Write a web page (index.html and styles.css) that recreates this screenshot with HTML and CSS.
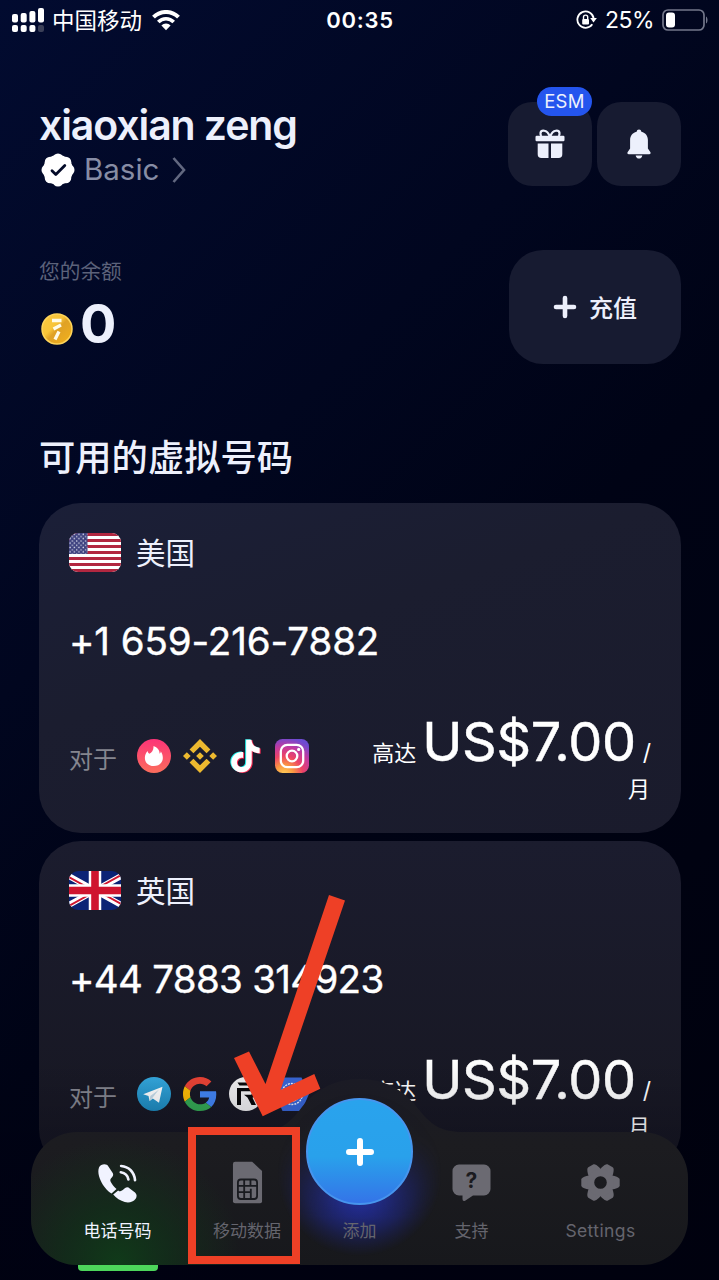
FILE: index.html
```html
<!DOCTYPE html>
<html lang="zh-CN">
<head>
<meta charset="utf-8">
<title>虚拟号码</title>
<link rel="stylesheet" href="styles.css">
</head>
<body>
<div class="screen">
  <header class="status">
    <div class="status-left">
      <svg class="signal" viewBox="0 0 32 24" fill="#fff"><rect y="6" width="6" height="8.5" rx="2"/><rect x="8.7" y="5" width="6" height="9.5" rx="2"/><rect x="17.4" y="3" width="6" height="11.5" rx="2"/><rect x="26" width="6" height="14.5" rx="2"/><rect y="17" width="6" height="7" rx="2"/><rect x="8.7" y="17" width="6" height="7" rx="2"/><rect x="17.4" y="17" width="6" height="7" rx="2"/><rect x="26" y="17" width="6" height="7" rx="2" fill="#3b4058"/></svg>
      <span class="carrier">中国移动</span>
      <svg class="wifi" viewBox="0 0 28 21" fill="none" stroke="#fff"><path d="M1.5 7.2C8.5.2 19.5.2 26.500 7.200" stroke-width="4"/><path d="M6.300 12C10.500 7.600 17.500 7.600 21.700 12" stroke-width="3.600"/><path d="M9.400 15.500C11.700 12.800 16.300 12.800 18.600 15.500L14 20.300Z" fill="#fff" stroke="none"/></svg>
    </div>
    <div class="clock">00:35</div>
    <div class="status-right">
      <svg class="lock" viewBox="0 0 21 20" fill="none" stroke="#fff" stroke-width="1.8"><path d="M16.300 14.300A8.200 8.200 0 1 1 17.700 8.500"/><path d="M14.200 8H20.900L17.500 12.500Z" fill="#fff" stroke="none"/><rect x="6.200" y="8.900" width="6.800" height="5.500" rx="1" fill="#fff" stroke="none"/><path d="M7.500 9V7.200a2.100 2.100 0 0 1 4.200 0V9" stroke-width="1.400"/></svg>
      <span class="percent">25%</span>
      <svg class="battery" viewBox="0 0 46 22"><rect x="1" y="1" width="41" height="20" rx="5" fill="none" stroke="#73778a" stroke-width="1.700"/><rect x="4" y="3.500" width="9" height="15" rx="3" fill="#fff"/><path d="M44 7.500c2 1 2 6 0 7z" fill="#73778a"/></svg>
    </div>
  </header>

  <main class="content">
    <section class="profile">
      <div class="who">
        <h1 class="name">xiaoxian zeng</h1>
        <div class="plan">
          <svg class="verified" viewBox="-17 -17 34 34" fill="#fff"><circle r="15"/><circle cx="11" r="5.500"/><circle cx="-11" r="5.500"/><circle cy="11" r="5.500"/><circle cy="-11" r="5.500"/><circle cx="7.800" cy="7.800" r="5.500"/><circle cx="-7.800" cy="7.800" r="5.500"/><circle cx="7.800" cy="-7.800" r="5.500"/><circle cx="-7.800" cy="-7.800" r="5.500"/><path d="M-6 .8L-2.200 4.500 6.800-4.600" fill="none" stroke="#030a28" stroke-width="2.800" stroke-linecap="round" stroke-linejoin="round"/></svg>
          <span class="plan-name">Basic</span>
          <svg class="chevron" viewBox="0 0 14 28" fill="none" stroke="#626880" stroke-width="2.600"><path d="M1.500 2L12 14 1.500 26"/></svg>
        </div>
      </div>
      <div class="actions">
        <div class="tile">
          <svg class="gift" viewBox="0 0 30 30" fill="#edf0fc"><path d="M14.500 7C12 0 6 1 5.500 4c-.2 1.200.3 2.400 1 3M15.500 7C18 0 24 1 24.500 4c.2 1.200-.3 2.400-1 3" fill="none" stroke="#edf0fc" stroke-width="2.200"/><rect x=".5" y="6.700" width="29" height="5.600" rx="1.200"/><path d="M2.700 14.500H13.500V29H6.500a3.800 3.800 0 0 1-3.800-3.800zM16 14.500H27.300V25.200A3.800 3.800 0 0 1 23.500 29H16z"/></svg>
          <span class="badge">ESM</span>
        </div>
        <div class="tile">
          <svg class="bell" viewBox="0 0 24 30" fill="#edf0fc"><path d="M12 .5a2.500 2.500 0 0 1 2.400 2.200c4.300 1 6.500 4.400 6.500 8.300v8.500l2.400 3.600c.7 1.200.3 2.200-1.100 2.200H1.800c-1.400 0-1.800-1-1.100-2.200l2.400-3.600V11c0-3.900 2.200-7.300 6.500-8.300A2.500 2.500 0 0 1 12 .5z"/><path d="M8.700 26.500h6.600C15 30.600 9 30.600 8.700 26.500z"/></svg>
        </div>
      </div>
    </section>

    <section class="balance">
      <div class="funds">
        <div class="funds-label">您的余额</div>
        <div class="funds-row">
          <svg class="coin" viewBox="0 0 32 32"><defs><linearGradient id="gold" x1="0" y1="0" x2="1" y2="1"><stop stop-color="#fcca42"/><stop offset=".4" stop-color="#f8c438"/><stop offset=".52" stop-color="#dfa126"/><stop offset="1" stop-color="#f4b21a"/></linearGradient></defs><circle cx="16" cy="16" r="15" fill="url(#gold)" stroke="#ffd55a" stroke-width="1.500"/><path d="M11 7.500H20.500M12.500 16L20 12M14 26.500L18 18.500" stroke="#fffbe8" stroke-width="3.300"/></svg>
          <span class="amount">0</span>
        </div>
      </div>
      <div class="topup">
        <svg class="plus" viewBox="0 0 24 24" stroke="#edf0fc" stroke-width="4.600" stroke-linecap="round"><path d="M12 3V21M3 12H21"/></svg>
        <span class="topup-label">充值</span>
      </div>
    </section>

    <h2 class="heading">可用的虚拟号码</h2>

    <article class="card">
      <div class="country">
        <svg class="flag" viewBox="0 0 52 39"><defs><clipPath id="fc"><rect width="52" height="39" rx="9"/></clipPath><pattern id="stars" width="4.400" height="4.400" patternUnits="userSpaceOnUse"><circle cx="1.100" cy="1.300" r=".75" fill="#d9dbea"/><circle cx="3.300" cy="3.500" r=".75" fill="#d9dbea"/></pattern></defs><g clip-path="url(#fc)"><rect width="52" height="39" fill="#fff"/><path d="M0 1.500H52M0 7.500H52M0 13.500H52M0 19.500H52M0 25.500H52M0 31.500H52M0 37.500H52" stroke="#b22740" stroke-width="3"/><rect width="18.500" height="21" fill="#3f4380"/><rect width="18.500" height="21" fill="url(#stars)"/></g></svg>
        <span>美国</span>
      </div>
      <div class="number">+1 659-216-7882</div>
      <div class="offer">
        <div class="apps">
          <span class="apps-label">对于</span>
          <svg class="app" viewBox="0 0 34 34"><defs><linearGradient id="tin" x1="0" y1="0" x2="0" y2="1"><stop stop-color="#fc3478"/><stop offset="1" stop-color="#fb6d5c"/></linearGradient></defs><circle cx="17" cy="17" r="17" fill="url(#tin)"/><path d="M16.500 7C21 8.500 23 12 22.500 14.800c1-.4 1.300-1.500 1.200-2.600 2.300 3.200 3 7.800.8 11-3.200 5-11.500 5-15 .7-2.600-3.300-2-8.700 1.100-11.900.3 1.300.8 2.200 1.800 2.700C14.800 13.700 16.800 11 16.500 7z" fill="#fff"/></svg>
          <svg class="app" viewBox="0 0 24 24" fill="#edb92f"><path d="M16.624 13.9202l2.7175 2.7154-7.353 7.353-7.353-7.352 2.7175-2.7164 4.6355 4.6595 4.6356-4.6595zm4.6366-4.6366L24 12l-2.7154 2.7164L18.5682 12l2.6924-2.7164zm-9.272.001l2.7163 2.6914-2.7164 2.7174v-.001L9.2721 12l2.7164-2.7154zm-9.2722-.001L5.4088 12l-2.6914 2.6924L0 12l2.7164-2.7164zM11.9885.0115l7.353 7.329-2.7174 2.7154-4.6356-4.6356-4.6355 4.6595-2.7174-2.7154 7.353-7.353z"/></svg>
          <svg class="app" viewBox="0 0 24 24"><defs><path id="note" d="M12.525.02c1.310-.02 2.610-.01 3.910-.02.08 1.530.63 3.090 1.750 4.170 1.120 1.110 2.700 1.620 4.240 1.790v4.030c-1.440-.05-2.890-.35-4.200-.97-.57-.26-1.100-.59-1.620-.93-.01 2.920.01 5.840-.02 8.750-.08 1.400-.54 2.790-1.350 3.940-1.310 1.920-3.580 3.170-5.910 3.210-1.430.08-2.860-.31-4.080-1.030-2.020-1.190-3.440-3.370-3.650-5.710-.02-.5-.03-1-.01-1.490.18-1.900 1.120-3.720 2.580-4.960 1.660-1.440 3.980-2.130 6.150-1.720.02 1.480-.04 2.960-.04 4.440-.99-.32-2.150-.23-3.020.37-.63.410-1.110 1.040-1.360 1.750-.21.510-.15 1.070-.14 1.610.24 1.640 1.820 3.020 3.500 2.870 1.120-.01 2.190-.66 2.770-1.610.19-.33.400-.67.410-1.060.100-1.790.060-3.570.070-5.360.010-4.030-.010-8.050.020-12.070z"/></defs><use href="#note" fill="#25f4ee" transform="translate(-.6 .2) scale(.96)"/><use href="#note" fill="#fe2c55" transform="translate(.8 .9) scale(.96)"/><use href="#note" fill="#fff" transform="translate(.1 .5) scale(.96)"/></svg>
          <svg class="app" viewBox="0 0 34 34"><defs><radialGradient id="ig" cx=".27" cy="1.050" r="1.100"><stop stop-color="#ffd25a"/><stop offset=".25" stop-color="#fb9a42"/><stop offset=".5" stop-color="#ed4366"/><stop offset=".75" stop-color="#c13aa0"/><stop offset="1" stop-color="#6d4bd2"/></radialGradient></defs><rect width="34" height="34" rx="7.500" fill="url(#ig)"/><g fill="none" stroke="#fff" stroke-width="2.300"><rect x="5.800" y="5.800" width="22.400" height="22.400" rx="6.500"/><circle cx="17" cy="17" r="5.300"/></g><circle cx="23.700" cy="10.400" r="1.600" fill="#fff"/></svg>
        </div>
        <div class="price">
          <div class="price-line"><span class="upto">高达</span><span class="sum">US$7.00</span><span class="slash">/</span></div>
          <div class="per">月</div>
        </div>
      </div>
    </article>

    <article class="card card-low">
      <div class="country">
        <svg class="flag" viewBox="0 0 52 39"><g clip-path="url(#fc)"><rect width="52" height="39" fill="#0b2375"/><path d="M-2 4L54 35M54 4L-2 35" stroke="#fff" stroke-width="6"/><path d="M-2 5L26 20.500M54 34L26 18.500M54 3L26 18.500M-2 36L26 20.500" stroke="#cf152f" stroke-width="2"/><path d="M26 0V39M0 19.500H52" stroke="#fff" stroke-width="12.500"/><path d="M26 0V39M0 19.500H52" stroke="#cf152f" stroke-width="7.600"/></g></svg>
        <span>英国</span>
      </div>
      <div class="number number-uk">+44 7883 314923</div>
      <div class="offer">
        <div class="apps">
          <span class="apps-label">对于</span>
          <svg class="app" viewBox="0 0 34 34"><defs><linearGradient id="tg" x1="0" y1="0" x2="0" y2="1"><stop stop-color="#35a8de"/><stop offset="1" stop-color="#1d8bbf"/></linearGradient></defs><circle cx="17" cy="17" r="17" fill="url(#tg)"/><path d="M6.200 17.200L25.500 9.700 22 25.700 15.800 21.500 12.600 24 11.500 19z" fill="#fff"/><path d="M12.600 24L13.300 19 22 12.500 15.700 20.500z" fill="#c5dcea"/></svg>
          <svg class="app" viewBox="0 0 48 48"><path fill="#ea4335" d="M24 9.500c3.540 0 6.710 1.220 9.210 3.600l6.850-6.850C35.900 2.380 30.470 0 24 0 14.620 0 6.510 5.380 2.560 13.220l7.980 6.190C12.430 13.720 17.740 9.500 24 9.500z"/><path fill="#4285f4" d="M46.980 24.550c0-1.570-.15-3.090-.38-4.550H24v9.020h12.940c-.58 2.960-2.260 5.480-4.780 7.180l7.730 6c4.510-4.180 7.090-10.360 7.090-17.650z"/><path fill="#fbbc05" d="M10.530 28.590c-.48-1.450-.76-2.990-.76-4.590s.27-3.140.76-4.590l-7.980-6.190C.92 16.460 0 20.120 0 24c0 3.880.92 7.540 2.560 10.780l7.970-6.190z"/><path fill="#34a853" d="M24 48c6.480 0 11.930-2.130 15.890-5.810l-7.730-6c-2.150 1.450-4.920 2.300-8.160 2.300-6.260 0-11.570-4.220-13.470-9.910l-7.980 6.190C6.510 42.620 14.620 48 24 48z"/></svg>
          <svg class="app" viewBox="0 0 34 34"><circle cx="17" cy="17" r="17" fill="#f0f0f1"/><path d="M8.500 5.500H25V8.500H10.500ZM8 11H21.500Q27 11 27 16Q27 19.500 23.500 20.800L27 28H22.500L18.500 20.500L15 17.800H22Q23 17.800 23 16Q23 14.300 21.500 14.300H12V28H8Z" fill="#08080a"/></svg>
          <svg class="app" viewBox="0 0 34 34"><path d="M7.500.5H26.500L34 17 26.500 34H7.500L0 17z" fill="#3866d6"/><g fill="none" stroke="#edf2ff" stroke-width="1.300"><circle cx="17" cy="17" r="10.500" stroke-dasharray="2 1"/><circle cx="17" cy="17" r="7"/><path d="M10 17H24M17 10V24M12.500 12.500c3 2 6 2 9 0M12.500 21.500c3-2 6-2 9 0"/></g></svg>
        </div>
        <div class="price">
          <div class="price-line"><span class="upto">高达</span><span class="sum">US$7.00</span><span class="slash">/</span></div>
          <div class="per">月</div>
        </div>
      </div>
    </article>
  </main>

  <div class="fade"></div>

  <nav class="dock">
    <svg class="dock-bg" viewBox="0 0 657 193">
      <defs>
        <linearGradient id="dk" x1="0" y1="0" x2="0" y2="1"><stop stop-color="#1b1b25"/><stop offset=".35" stop-color="#1c1c20"/><stop offset="1" stop-color="#17181c"/></linearGradient>
        <radialGradient id="gg" gradientUnits="userSpaceOnUse" cx="87" cy="184" r="125"><stop stop-color="#0f4019" stop-opacity=".85"/><stop offset=".45" stop-color="#103519" stop-opacity=".6"/><stop offset="1" stop-color="#17351c" stop-opacity="0"/></radialGradient>
        <radialGradient id="bg" gradientUnits="userSpaceOnUse" cx="328.500" cy="96" r="82"><stop offset=".4" stop-color="#2430a8" stop-opacity=".9"/><stop offset=".7" stop-color="#1e267c" stop-opacity=".6"/><stop offset="1" stop-color="#1b2060" stop-opacity="0"/></radialGradient>
        <linearGradient id="bm" x1="0" y1="0" x2="0" y2="1"><stop offset=".3" stop-color="#fff" stop-opacity=".05"/><stop offset=".72" stop-color="#fff"/></linearGradient>
        <mask id="bk"><rect x="230" width="200" height="193" fill="url(#bm)"/></mask>
        <clipPath id="dc"><path id="dp" d="M46 54H224C246 54 256 48 268 33C283 12 303 1 328.500 1C354 1 374 12 389 33C401 48 411 54 433 54H611A46 46 0 0 1 657 100V141A46 46 0 0 1 611 187H46A46 46 0 0 1 0 141V100A46 46 0 0 1 46 54Z"/></clipPath>
      </defs>
      <path d="M47 187H127V189a4 4 0 0 1-4 4H51a4 4 0 0 1-4-4z" fill="#4dd55b"/>
      <use href="#dp" fill="url(#dk)"/>
      <g clip-path="url(#dc)"><rect width="230" height="193" fill="url(#gg)"/><rect x="230" width="200" height="193" fill="url(#bg)" mask="url(#bk)"/></g>
    </svg>
    <div class="tabs">
      <div class="tab active"><svg class="tab-icon" viewBox="232 151 124 124" fill="#f1f3ff"><path d="M245 160C254 156 263 158 267 165L280 185C283 191 279 195 274 201C270 206 273 211 277 217C281 223 285 228 291 233L276 246C263 239 250 223 243 207C235 190 232 167 245 160Z"/><path d="M281 249L296 237C301 241 305 240 310 236L317 230C322 226 327 227 331 231L347 243C353 248 353 256 349 262C341 272 329 275 316 272C303 268 290 260 281 249Z"/><g fill="none" stroke="#f1f3ff" stroke-width="8" stroke-linecap="round"><path d="M305 163C328 165 345 181 347 206"/><path d="M304 182C317 184 325 192 327 204"/></g></svg><span>电话号码</span></div>
      <div class="tab"><svg class="tab-icon" viewBox="620 151 124 130"><path d="M645 153H696L726 181V273Q726 279 720 279H645Q638 279 638 273V160Q638 153 645 153Z" fill="#6b6a72"/><g fill="none" stroke="#191a1f" stroke-width="5.500"><rect x="653" y="207" width="58" height="59" rx="9"/><path d="M672 207V266M691 207V226M653 226H711M653 245H692V266M653 245H672M692 245V235"/></g></svg><span>移动数据</span></div>
      <div class="tab"><div class="add"><svg class="add-plus" viewBox="0 0 30 30" stroke="#fff" stroke-width="6" stroke-linecap="round"><path d="M15 4V26M4 15H26"/></svg></div><span>添加</span></div>
      <div class="tab"><svg class="tab-icon" viewBox="0 0 41 41"><path d="M8 2.500H33A6.500 6.500 0 0 1 39.500 9V27A6.500 6.500 0 0 1 33 33.500H22L14.500 38.500Q11.500 40 11.500 37V33.500H8A6.500 6.500 0 0 1 1.500 27V9A6.500 6.500 0 0 1 8 2.500Z" fill="#6b6a72"/><text class="question" x="20.500" y="25.500" text-anchor="middle">?</text></svg><span>支持</span></div>
      <div class="tab"><svg class="tab-icon" viewBox="-20.500 -20.500 41 41"><defs><path id="tooth" d="M9-7.500L14-6.500Q19.200-5 19.200-3V3Q19.200 5 14 6.500L9 7.500Z"/></defs><g fill="#6b6a72"><use href="#tooth"/><use href="#tooth" transform="rotate(60)"/><use href="#tooth" transform="rotate(120)"/><use href="#tooth" transform="rotate(180)"/><use href="#tooth" transform="rotate(240)"/><use href="#tooth" transform="rotate(300)"/></g><circle r="9.900" fill="none" stroke="#6b6a72" stroke-width="7.200"/></svg><span class="latin">Settings</span></div>
    </div>
  </nav>

  <svg class="callout" viewBox="0 0 719 1280"><path d="M329 895L345 900.500L280.500 1090L314.300 1074L320.300 1088.700L262.700 1116.300L234 1058L249 1051.500L265.500 1084Z" fill="#ee4026"/><rect x="192" y="1131" width="104" height="129" fill="none" stroke="#ee4026" stroke-width="8"/></svg>
</div>
</body>
</html>
```

FILE: styles.css
```css
* { box-sizing: border-box; }
body { margin: 0; background: #000010; font-family: Inter, "Noto Sans CJK SC", sans-serif; color: #edf0fc; }
svg { display: block; flex: none; }
h1, h2 { margin: 0; }
.screen { position: relative; width: 719px; height: 1280px; overflow: hidden; background: linear-gradient(135deg, #020b30 0%, #01061f 35%, #000315 55%, #00010d 100%); }

.status { display: grid; grid-template-columns: 1fr auto 1fr; align-items: center; height: 40px; padding: 0 11px 0 12px; color: #fff; }
.status-left, .status-right { display: flex; align-items: center; }
.status-right { justify-content: flex-end; }
.signal { width: 32px; height: 24px; }
.carrier { margin: 2px 10px 0 8px; font-size: 22.500px; line-height: 30px; }
.wifi { width: 28px; height: 21px; }
.clock { font-size: 22px; font-weight: 600; letter-spacing: 0.7px; }
.lock { width: 21px; height: 20px; margin-right: 8px; }
.percent { font-size: 23px; margin-right: 8px; letter-spacing: -0.5px; }
.battery { width: 46px; height: 22px; }

.content { padding: 62px 38px 0 39px; }
.profile { display: flex; justify-content: space-between; height: 84px; }
.who { padding-top: 1px; }
.name { font-size: 41px; font-weight: 600; line-height: 44px; letter-spacing: -1.1px; white-space: nowrap; }
.plan { display: flex; align-items: center; height: 46px; padding-left: 2px; color: #878da5; }
.verified { width: 34px; height: 34px; }
.plan-name { margin: -2px 0 0 9px; font-size: 29.500px; line-height: 36px; letter-spacing: 0; }
.chevron { width: 14px; height: 28px; margin-left: 13px; }
.actions { display: flex; gap: 5px; }
.tile { position: relative; display: flex; align-items: center; justify-content: center; width: 84px; height: 84px; border-radius: 24px; background: #171b31; }
.gift { width: 30px; height: 30px; }
.bell { width: 24px; height: 30px; }
.badge { position: absolute; top: -15px; right: 0; width: 55px; height: 29px; border-radius: 15px; background: #2455ee; font-size: 18.500px; line-height: 29px; text-align: center; letter-spacing: 0.3px; }

.balance { display: flex; justify-content: space-between; margin-top: 64px; height: 114px; }
.funds-label { margin-top: 7px; font-size: 20.700px; line-height: 30px; color: #5c627a; }
.funds-row { display: flex; align-items: center; margin-top: 6px; padding-left: 2px; }
.coin { width: 32px; height: 32px; margin-top: 9px; }
.amount { margin-left: 7px; font-size: 54px; font-weight: 700; line-height: 62px; }
.topup { display: flex; align-items: center; justify-content: center; width: 172px; height: 114px; border-radius: 34px; background: #171b31; font-size: 24px; font-weight: 500; }
.plus { width: 24px; height: 24px; margin-right: 12px; }
.topup-label { margin-top: -2px; }

.heading { margin: 68px 0 18px; font-size: 36.300px; font-weight: 500; line-height: 53px; }

.card { height: 330px; padding: 30px 30px 0; border-radius: 42px; background: linear-gradient(160deg, #1b1f38 0%, #1b1d2f 40%, #1a1b2c 100%); }
.card + .card { margin-top: 8px; }
.card-low { background: linear-gradient(180deg, #1b1c2e, #171721); }
.country { display: flex; align-items: center; height: 39px; font-size: 29.500px; line-height: 39px; }
.country span { padding-top: 1px; }
.flag { width: 52px; height: 39px; margin-right: 15px; }
.number { margin-top: 44px; font-size: 38.500px; font-weight: 400; line-height: 50px; letter-spacing: -0.1px; color: #fff; white-space: nowrap; -webkit-text-stroke: 0.4px #fff; }
.number-uk { letter-spacing: -0.7px; }
.offer { display: flex; justify-content: space-between; margin-top: 45px; }
.apps { display: flex; align-items: center; gap: 12px; height: 34px; margin-top: 28px; }
.apps-label { margin: 8px 8px 0 0; font-size: 24px; line-height: 34px; color: #85868f; }
.app { width: 34px; height: 34px; }
.price { color: #fff; }
.price-line { display: flex; align-items: baseline; height: 60px; padding-top: 1px; line-height: 60px; white-space: nowrap; }
.upto { font-size: 22px; margin-right: 6px; }
.sum { font-size: 54px; font-weight: 400; letter-spacing: -0.3px; -webkit-text-stroke: 0.5px #fff; }
.slash { font-size: 23px; margin-left: 7px; }
.per { font-size: 22px; line-height: 36px; padding-right: 1px; text-align: right; }

.fade { position: absolute; left: 0; right: 0; bottom: 0; height: 220px; background: linear-gradient(180deg, rgba(0, 0, 16, 0), rgba(0, 0, 16, 0.5)); }

.dock { position: absolute; left: 31px; top: 1078px; width: 657px; height: 193px; }
.dock-bg { position: absolute; left: 0; top: 0; width: 657px; height: 193px; }
.tabs { position: relative; display: grid; grid-template-columns: 131px 128px 97px 127px 131px; padding: 0 21px; height: 187px; color: #65656e; }
.tab { display: flex; flex-direction: column; align-items: center; justify-content: flex-end; padding-bottom: 20px; font-size: 17px; line-height: 28px; }
.active { color: #f1f3ff; }
.tab-icon { width: 41px; height: 43px; margin-bottom: 13px; }
.add { display: flex; align-items: center; justify-content: center; flex: none; width: 107px; height: 107px; margin-bottom: 12px; border: 2px solid #4795ee; border-radius: 50%; background: linear-gradient(180deg, #29a3ed 0%, #29a1eb 55%, #3474e8 100%); }
.add-plus { width: 30px; height: 30px; }
.question { font: 700 21px Inter, sans-serif; fill: #1b1b1f; }
.latin { font-size: 17.500px; letter-spacing: 0.4px; }
.callout { position: absolute; left: 0; top: 0; width: 719px; height: 1280px; }
```
